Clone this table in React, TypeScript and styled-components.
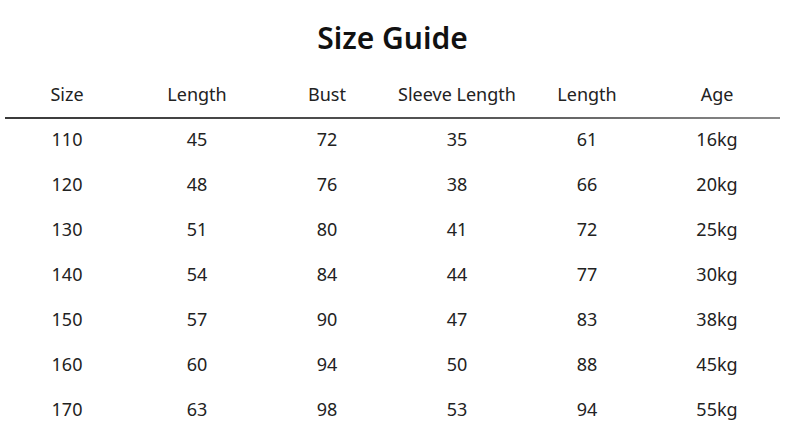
import React from "react";
import styled, {createGlobalStyle} from "styled-components";

const GlobalStyle = createGlobalStyle`
  html, body {
    margin: 0;
    padding: 0;
    background: #fff;
  }
  body {
    font-family: "Noto Sans", "Open Sans", sans-serif;
    color: #222;
  }
`;

const Page = styled.div`
  width: 785px;
  height: 445px;
  overflow: hidden;
  padding-top: 18px;
  box-sizing: border-box;
`;

const Title = styled.h1`
  margin: 0;
  font-size: 30px;
  line-height: 40px;
  font-weight: 600;
  text-align: center;
  color: #111;
`;

const Row = styled.div<{ $header?: boolean }>`
  display: grid;
  grid-template-columns: repeat(6, 130px);
  padding-left: 2px;
  height: ${p => (p.$header ? 44 : 45)}px;
  align-items: center;
  font-size: 18px;
  margin-top: ${p => (p.$header ? 14 : 0)}px;
  margin-bottom: ${p => (p.$header ? 1 : 0)}px;
`;

const Cell = styled.div`
  text-align: center;
  white-space: nowrap;
`;

const Divider = styled.div`
  margin: 0 5px 0 5px;
  height: 2px;
  background: linear-gradient(to right, #3a3a3a, #555 60%, #8a8a8a);
`;

const Body = styled.div`
  margin-top: -3px;
`;

const headers = ["Size", "Length", "Bust", "Sleeve Length", "Length", "Age"];

const rows = [
	["110", "45", "72", "35", "61", "16kg"],
	["120", "48", "76", "38", "66", "20kg"],
	["130", "51", "80", "41", "72", "25kg"],
	["140", "54", "84", "44", "77", "30kg"],
	["150", "57", "90", "47", "83", "38kg"],
	["160", "60", "94", "50", "88", "45kg"],
	["170", "63", "98", "53", "94", "55kg"],
];

const App = () => {
	return (
		<Page>
			<GlobalStyle/>
			<Title>Size Guide</Title>
			<Row $header>
				{headers.map((h, i) => <Cell key={i}>{h}</Cell>)}
			</Row>
			<Divider/>
			<Body>
				{rows.map(row =>
					<Row key={row[0]}>
						{row.map((v, i) => <Cell key={i}>{v}</Cell>)}
					</Row>,
				)}
			</Body>
		</Page>
	);
};

export default App;
